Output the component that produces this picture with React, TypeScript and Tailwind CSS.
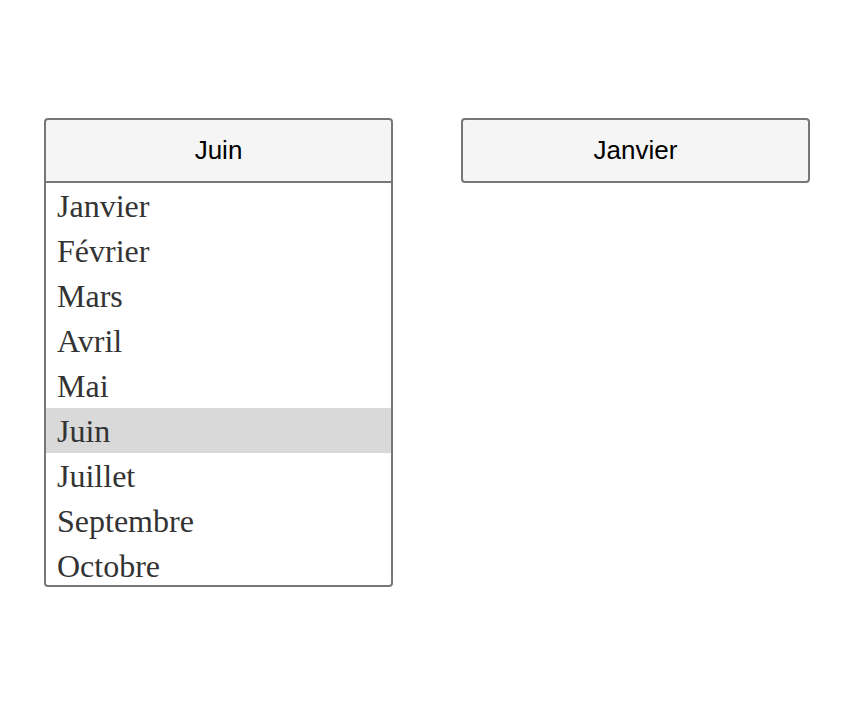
const MONTHS = ["Janvier", "Février", "Mars", "Avril", "Mai", "Juin", "Juillet", "Septembre", "Octobre"];

function Dropdown({ value, open }: { value: string; open?: boolean }) {
  return (
    <div className="w-[349px]">
      <button
        className={`flex h-[65px] w-full items-center justify-center rounded-[4px] border-2 border-[#777] bg-[#f5f5f5] text-[26px] text-black ${
          open ? "rounded-b-none" : ""
        }`}
        style={{ fontFamily: '"Liberation Sans", Arial, sans-serif' }}
      >
        {value}
      </button>
      {open && (
        <ul
          className="-mt-[2px] h-[406px] overflow-hidden rounded-b-[4px] border-2 border-[#777] text-[32px] text-[#333]"
          style={{ fontFamily: '"Liberation Serif", "Times New Roman", serif' }}
        >
          {MONTHS.map((m) => (
            <li
              key={m}
              className={`flex h-[45px] items-center pl-[11px] leading-none ${m === value ? "bg-[#d9d9d9]" : ""}`}
            >
              {m}
            </li>
          ))}
        </ul>
      )}
    </div>
  );
}

export default function App() {
  return (
    <div className="min-h-[716px] bg-white pl-[44px] pt-[118px]">
      <div className="flex items-start gap-[68px]">
        <Dropdown value="Juin" open />
        <Dropdown value="Janvier" />
      </div>
    </div>
  );
}
